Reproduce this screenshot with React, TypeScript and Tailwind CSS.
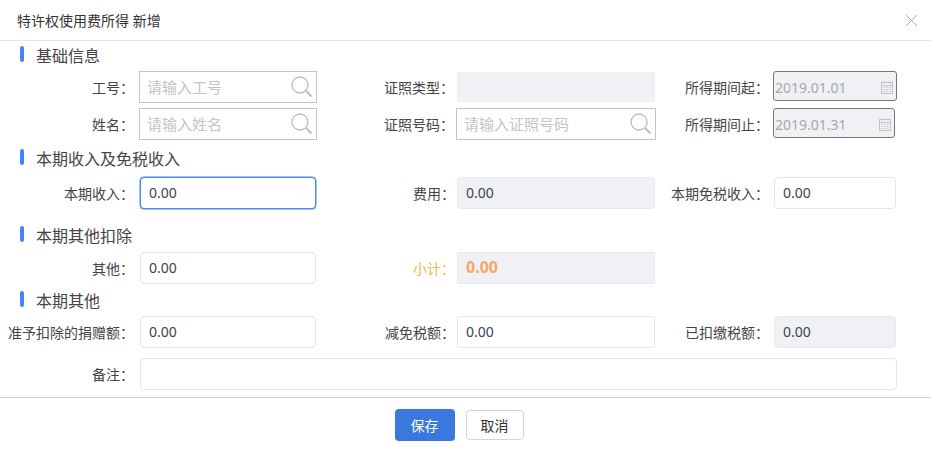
import React from 'react';
import { X } from 'lucide-react';

const font = "font-['Noto_Sans','Noto_Sans_CJK_SC',sans-serif]";

function SearchIcon() {
  return (
    <svg width="22" height="22" viewBox="0 0 22 22" fill="none" className="text-[#bdbdbd] shrink-0">
      <circle cx="9" cy="9" r="8" stroke="currentColor" strokeWidth="1.3" />
      <path d="M15 15 L20.5 20.5" stroke="currentColor" strokeWidth="2" />
    </svg>
  );
}

function CalendarIcon() {
  return (
    <svg width="12" height="13" viewBox="0 0 12 13" fill="none" stroke="#c4c4c4" strokeWidth="1" className="shrink-0">
      <rect x="0.5" y="1.5" width="11" height="11" />
      <path d="M0.5 4.5H11.5M3 0V2.5M9 0V2.5" />
      <path d="M2.5 6.5H4M5.2 6.5H6.8M8 6.5H9.5M2.5 8.5H4M5.2 8.5H6.8M8 8.5H9.5M2.5 10.5H4M5.2 10.5H6.8M8 10.5H9.5" />
    </svg>
  );
}

function Section({ title, className }: { title: string; className: string }) {
  return (
    <div className={`flex items-center h-4 ${className}`}>
      <span className="ml-5 w-1 h-4 rounded-full bg-[#4285f4]" />
      <span className="ml-3 pt-[3px] text-[16px] leading-none text-[#444]">{title}</span>
    </div>
  );
}

function Label({ text, width, className = '' }: { text: string; width: string; className?: string }) {
  return <label className={`shrink-0 text-right text-[14px] text-[#444] ${width} ${className}`}>{text}</label>;
}

function SearchField({ placeholder, width }: { placeholder: string; width: string }) {
  return (
    <div className={`h-8 flex items-center justify-between border border-[#c4c4c4] pl-[7px] pr-[3px] text-[15px] text-[#c4c4c4] bg-white ${width}`}>
      <span>{placeholder}</span>
      <SearchIcon />
    </div>
  );
}

function Input({ value = '', width, disabled = false, focus = false, className = '' }: {
  value?: string; width: string; disabled?: boolean; focus?: boolean; className?: string;
}) {
  const tone = focus
    ? 'border-[#4a8af0] bg-white shadow-[0_0_0_0.5px_#4a8af0]'
    : disabled
      ? 'border-[#e9eaee] bg-[#f0f1f5]'
      : 'border-[#e4e5ea] bg-white';
  return (
    <div className={`h-8 flex items-center pl-[8px] pb-[2px] rounded-[4px] border text-[14px] text-[#3c4450] ${tone} ${width} ${className}`}>
      {value}
    </div>
  );
}

function DateField({ value, width }: { value: string; width: string }) {
  return (
    <div className={`h-[30px] self-start flex items-center justify-between pl-[1px] pr-[3px] pt-[2px] rounded-[3px] border border-[#75757a] bg-[#f0f1f5] text-[14px] text-[#a6a8ad] ${width}`}>
      <span>{value}</span>
      <CalendarIcon />
    </div>
  );
}

export default function App() {
  return (
    <div className={`w-[931px] h-[452px] bg-white overflow-hidden ${font}`}>
      {/* Header */}
      <div className="h-[41px] flex items-center justify-between border-b border-[#e4e4e4] pl-[17px] pr-[9px]">
        <span className="text-[14px] text-[#333]">特许权使用费所得 新增</span>
        <X size={21} strokeWidth={1} className="text-[#a0a0a0]" />
      </div>

      <Section title="基础信息" className="mt-[5px] mb-[-1px]" />
      <div className="flex items-center mt-[10px]">
        <Label text="工号：" width="w-[134px]" className="mr-[5px]" />
        <SearchField placeholder="请输入工号" width="w-[178px]" />
        <Label text="证照类型：" width="w-[137px]" className="mr-[3px]" />
        <div className="h-[30px] w-[198px] bg-[#f0f1f5]" />
        <Label text="所得期间起：" width="w-[114px]" className="mr-[4px]" />
        <DateField value="2019.01.01" width="w-[124px]" />
      </div>
      <div className="flex items-center mt-[5px]">
        <Label text="姓名：" width="w-[134px]" className="mr-[5px]" />
        <SearchField placeholder="请输入姓名" width="w-[178px]" />
        <Label text="证照号码：" width="w-[137px]" className="mr-[2px]" />
        <SearchField placeholder="请输入证照号码" width="w-[200px]" />
        <Label text="所得期间止：" width="w-[113px]" className="mr-[4px]" />
        <DateField value="2019.01.31" width="w-[122px]" />
      </div>

      <Section title="本期收入及免税收入" className="mt-[9px]" />
      <div className="flex items-center mt-3">
        <Label text="本期收入：" width="w-[134px]" className="mr-[6px]" />
        <Input value="0.00" width="w-[176px]" focus />
        <Label text="费用：" width="w-[139px]" className="mr-[2px]" />
        <Input value="0.00" width="w-[198px]" disabled />
        <Label text="本期免税收入：" width="w-[114px]" className="mr-[5px]" />
        <Input value="0.00" width="w-[122px]" />
      </div>

      <Section title="本期其他扣除" className="mt-[17px]" />
      <div className="flex items-center mt-[10px]">
        <Label text="其他：" width="w-[134px]" className="mr-[6px]" />
        <Input value="0.00" width="w-[176px]" />
        <Label text="小计：" width="w-[139px]" className="mr-[2px] !text-[#f5b342]" />
        <Input value="0.00" width="w-[198px]" disabled className="!text-[#f5a765] !text-[16px] font-bold rounded-none" />
      </div>

      <Section title="本期其他" className="mt-[7px]" />
      <div className="flex items-center mt-[9px]">
        <Label text="准予扣除的捐赠额：" width="w-[134px]" className="mr-[6px]" />
        <Input value="0.00" width="w-[176px]" />
        <Label text="减免税额：" width="w-[139px]" className="mr-[2px]" />
        <Input value="0.00" width="w-[198px]" />
        <Label text="已扣缴税额：" width="w-[114px]" className="mr-[5px]" />
        <Input value="0.00" width="w-[122px]" disabled />
      </div>
      <div className="flex items-center mt-[10px]">
        <Label text="备注：" width="w-[134px]" className="mr-[6px]" />
        <Input width="w-[757px]" />
      </div>

      {/* Footer */}
      <div className="mt-[7px] border-t border-[#d4d4d4] flex items-center justify-center pt-[11px] pr-[12px]">
        <button className="w-[60px] h-8 ml-[-1px] rounded-[4px] bg-[#3a78de] text-white text-[14px]">保存</button>
        <button className="w-[58px] h-[30px] ml-[11px] rounded-[4px] border border-[#d4d4d4] bg-white text-[#333] text-[14px]">取消</button>
      </div>
    </div>
  );
}
